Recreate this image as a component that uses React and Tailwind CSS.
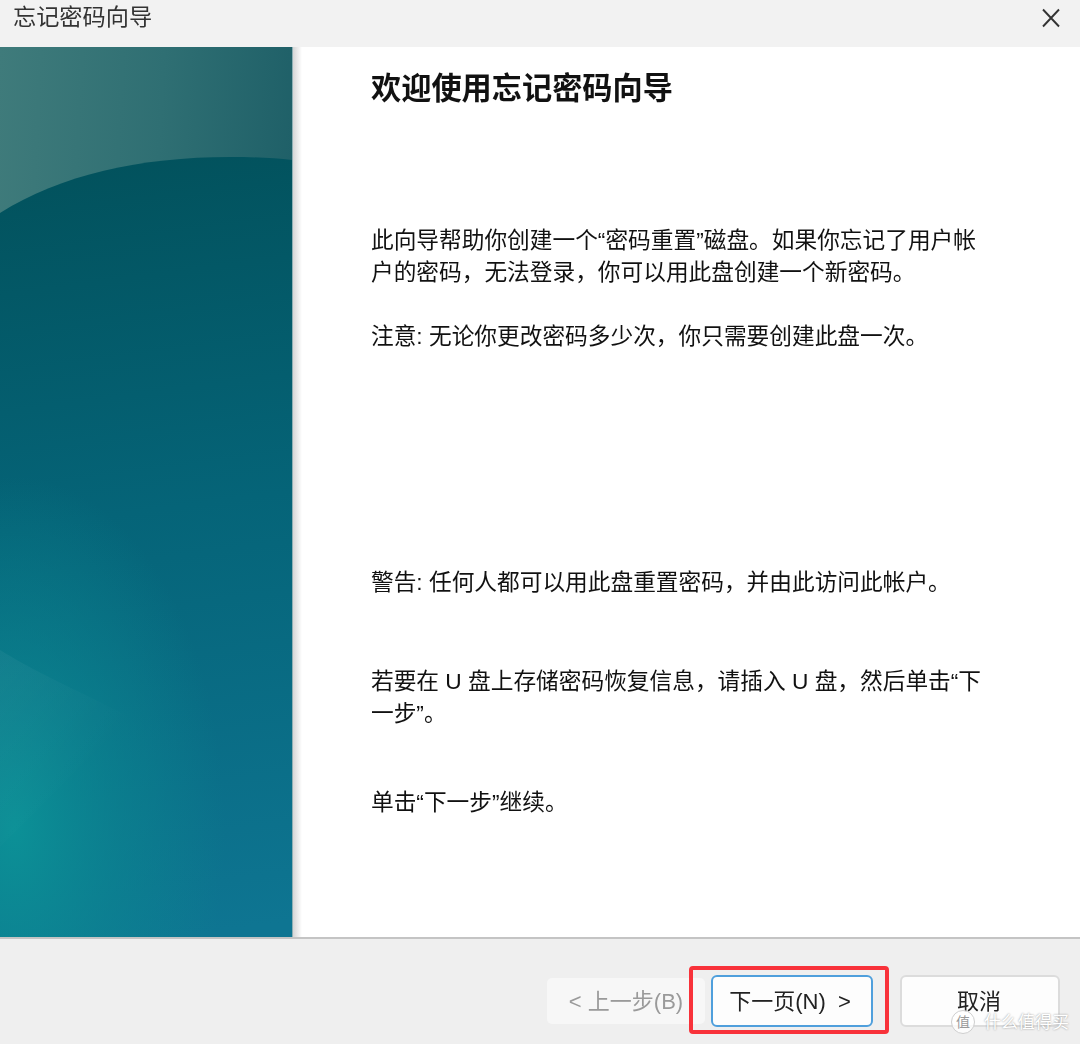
import React from "react";

const SidebarArt = () => (
  <svg className="block w-full h-full" viewBox="0 0 292 890" preserveAspectRatio="none">
    <defs>
      <linearGradient id="topGlass" x1="0" y1="0" x2="1" y2="0.16">
        <stop offset="0" stopColor="#3f7b7b" />
        <stop offset="0.55" stopColor="#2f6f73" />
        <stop offset="1" stopColor="#1f6068" />
      </linearGradient>
      <linearGradient id="body" x1="0.55" y1="0" x2="0.6" y2="1">
        <stop offset="0" stopColor="#02525d" />
        <stop offset="0.45" stopColor="#056478" />
        <stop offset="1" stopColor="#0e7592" />
      </linearGradient>
      <radialGradient id="glow" cx="0.05" cy="0.78" r="0.72">
        <stop offset="0" stopColor="#0c9498" stopOpacity="0.9" />
        <stop offset="0.5" stopColor="#0b8a92" stopOpacity="0.5" />
        <stop offset="1" stopColor="#0b8a92" stopOpacity="0" />
      </radialGradient>
      <linearGradient id="wedge" x1="0" y1="0.1" x2="0.55" y2="0.75">
        <stop offset="0" stopColor="#ffffff" stopOpacity="0.04" />
        <stop offset="1" stopColor="#ffffff" stopOpacity="0" />
      </linearGradient>
    </defs>
    <rect width="292" height="890" fill="url(#topGlass)" />
    <path d="M0 166C60 128 140 110 230 110C255 110 275 111 292 113V890H0Z" fill="url(#body)" />
    <rect y="400" width="292" height="490" fill="url(#glow)" />
    <path d="M0 603C30 622 70 640 130 670L0 800Z" fill="url(#wedge)" />
  </svg>
);

const App = () => {
  return (
    <div className="relative w-[1080px] h-[1044px] overflow-hidden bg-white text-[#111] font-['Liberation_Sans','Noto_Sans_CJK_SC',sans-serif]">
      {/* Title bar */}
      <div className="h-[47px] bg-[#f2f2f2] flex items-start justify-between pl-[13px] pr-[19px]">
        <span className="text-[23.2px] leading-[35px] text-[#333] blur-[0.5px]">忘记密码向导</span>
        <svg className="mt-[8px] blur-[0.4px]" width="20" height="20" viewBox="0 0 20 20" fill="none" stroke="#333" strokeWidth="1.9">
          <path d="M2 1.5L18 18.5M18 1.5L2 18.5" />
        </svg>
      </div>

      {/* Wizard body */}
      <div className="flex h-[890px]">
        <div className="w-[293px] shrink-0 border-r border-[#8fb0b5]">
          <SidebarArt />
        </div>
        <div className="w-[9px] shrink-0 bg-gradient-to-r from-[#d6d6d6] to-white" />
        <div className="pl-[69px] pt-[22px] text-[22.7px] leading-[32px] whitespace-nowrap blur-[0.5px]">
          <h1 className="text-[30.2px] leading-[40px] font-bold">欢迎使用忘记密码向导</h1>
          <p className="mt-[115px]">
            此向导帮助你创建一个“密码重置”磁盘。如果你忘记了用户帐<br />
            户的密码，无法登录，你可以用此盘创建一个新密码。
          </p>
          <p className="mt-[32px]">注意: 无论你更改密码多少次，你只需要创建此盘一次。</p>
          <p className="mt-[214px]">警告: 任何人都可以用此盘重置密码，并由此访问此帐户。</p>
          <p className="mt-[67px]">
            若要在 U 盘上存储密码恢复信息，请插入 U 盘，然后单击“下<br />
            一步”。
          </p>
          <p className="mt-[57px]">单击“下一步”继续。</p>
        </div>
      </div>

      {/* Footer buttons */}
      <div className="h-[107px] bg-[#efefef] border-t-2 border-[#c4c4c4] flex items-start justify-end pt-[36px] pr-[20px] text-[22px]">
        <button className="mt-[3px] w-[158px] h-[46px] rounded-[5px] bg-[#f7f7f7] text-[#9a9a9a] flex items-center justify-center">
          <span className="blur-[0.5px]">&lt; 上一步(B)</span>
        </button>
        <button className="relative ml-[6px] w-[162px] h-[52px] rounded-[6px] bg-[#fdfdfd] border-2 border-[#4f9fdc] text-[#222] flex items-center justify-center">
          <span className="blur-[0.5px] -ml-[4px]">下一页(N)&nbsp; &gt;</span>
          <span className="absolute left-[-24px] top-[-11px] w-[200px] h-[68px] rounded-[4px] border-[4px] border-[#f8323a]" />
        </button>
        <button className="ml-[27px] w-[160px] h-[52px] rounded-[6px] bg-[#fdfdfd] border-2 border-[#dcdcdc] text-[#222] flex items-center justify-center">
          <span className="blur-[0.5px] -ml-[2px]">取消</span>
        </button>
      </div>

      {/* Watermark */}
      <div className="absolute left-[951px] top-[1010px] flex items-center gap-[9px] text-white text-[17px] leading-none [text-shadow:0_0_2px_#8a8a8a]">
        <span className="w-[24px] h-[24px] rounded-full bg-[#ffffffcc] border border-[#cfcfcf] text-[#9a9a9a] flex items-center justify-center text-[14px] [text-shadow:none]">值</span>
        <span>什么值得买</span>
      </div>
    </div>
  );
};

export default App;
